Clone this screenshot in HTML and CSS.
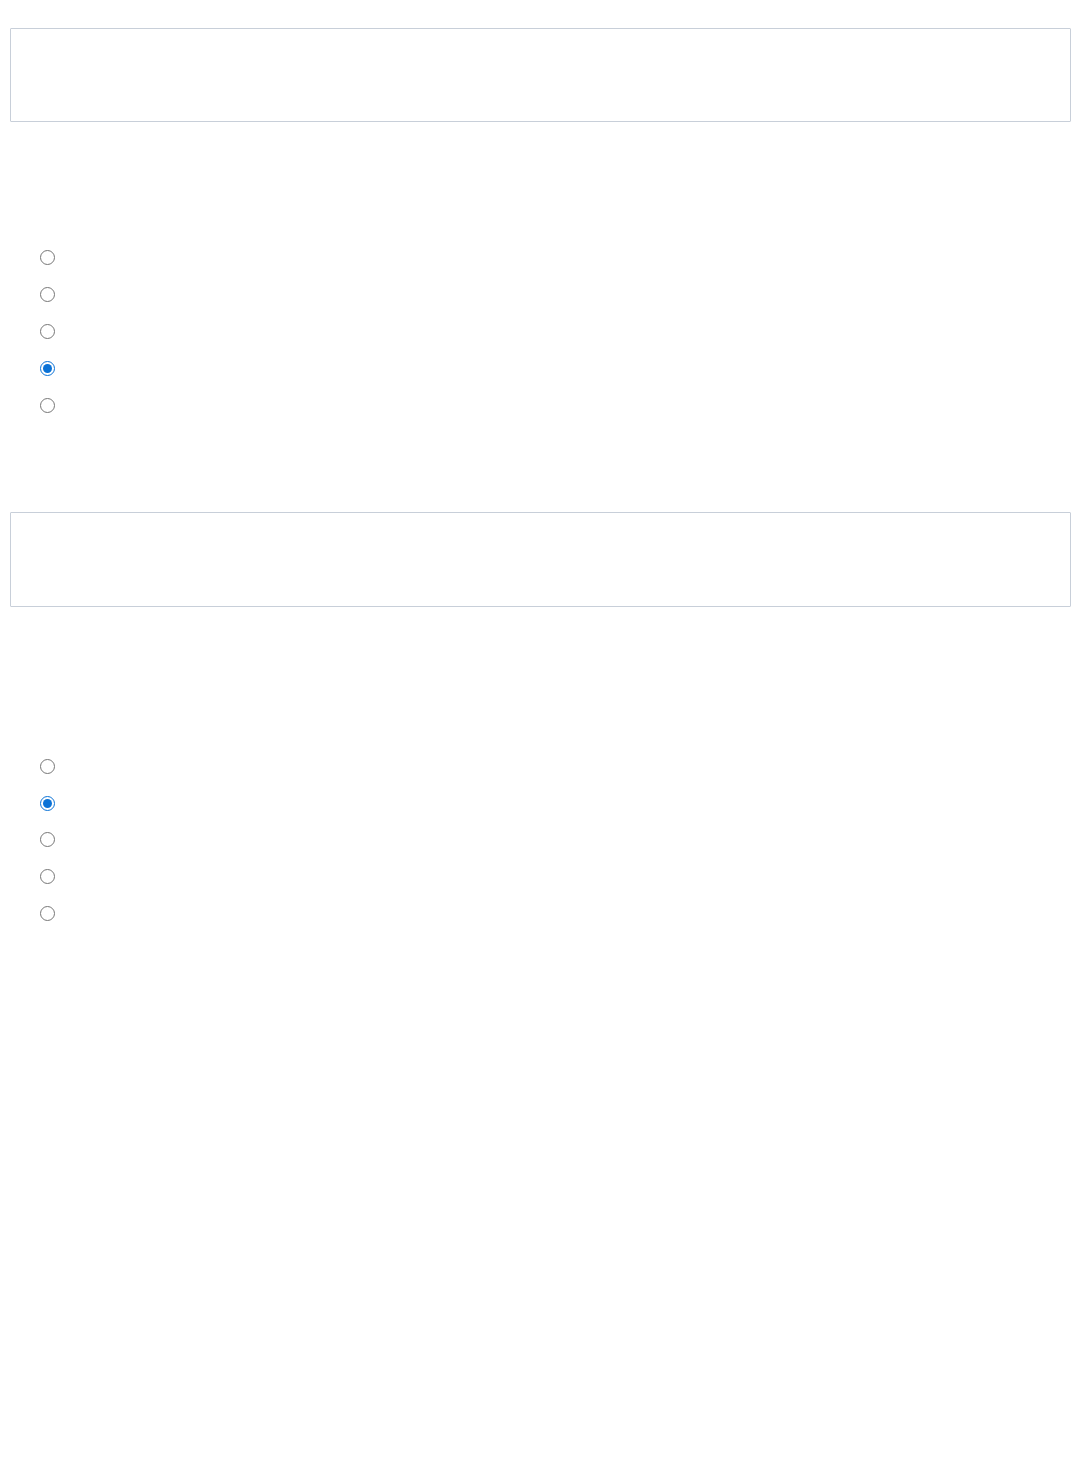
FILE: index.html
```html
<!DOCTYPE html>
<html lang="en">
<head>
<meta charset="utf-8">
<title>Form</title>
<link rel="stylesheet" href="styles.css">
</head>
<body>
<main class="page">
  <section class="question q1">
    <div class="answer-box"></div>
    <ul class="options">
      <li class="option"><input type="radio" name="a"></li>
      <li class="option"><input type="radio" name="a"></li>
      <li class="option"><input type="radio" name="a"></li>
      <li class="option"><input type="radio" name="a" checked></li>
      <li class="option"><input type="radio" name="a"></li>
    </ul>
  </section>
  <section class="question q2">
    <div class="answer-box"></div>
    <ul class="options">
      <li class="option"><input type="radio" name="b"></li>
      <li class="option"><input type="radio" name="b" checked></li>
      <li class="option"><input type="radio" name="b"></li>
      <li class="option"><input type="radio" name="b"></li>
      <li class="option"><input type="radio" name="b"></li>
    </ul>
  </section>
</main>
</body>
</html>
```
FILE: styles.css
```css
html, body {
  margin: 0;
  padding: 0;
  background: #ffffff;
  font-family: "Liberation Sans", Arial, sans-serif;
}

.page {
  display: flex;
  flex-direction: column;
  padding: 28px 8px 0 10px;
}

.question {
  display: flex;
  flex-direction: column;
}

.answer-box {
  height: 92px;
  border: 1px solid #c8cfd9;
  border-radius: 1px;
  background: #fff;
}

.q2 .answer-box {
  height: 93px;
}

.options {
  list-style: none;
  margin: 0;
  padding: 0 0 0 30px;
  display: flex;
  flex-direction: column;
}

.q1 .options {
  margin-top: 117px;
}

.q2 {
  margin-top: 88px;
}

.q2 .options {
  margin-top: 141px;
}

.option {
  height: 37px;
  display: flex;
  align-items: center;
}

.q2 .option {
  height: 36.75px;
}

.option input {
  margin: 0;
  width: 15px;
  height: 15px;
  accent-color: #0b72d6;
}
```
